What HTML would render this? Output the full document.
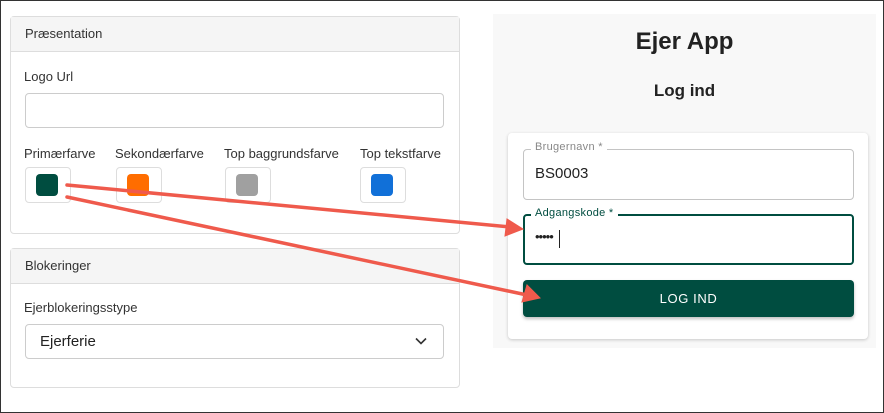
<!DOCTYPE html>
<html><head><style>
body{margin:0;width:884px;height:413px;position:relative;overflow:hidden;background:#fff;font-family:"Liberation Sans",Arial,sans-serif;}
.frame{position:absolute;left:0;top:0;width:882px;height:411px;border:1px solid #333;}
.panel{position:absolute;left:10px;width:448px;border:1px solid #ddd;border-radius:4px;background:#fff;}
.ph{height:34px;background:#f5f5f5;border-bottom:1px solid #ddd;font-size:13px;color:#333;line-height:34px;padding-left:14px;}
.lbl{position:absolute;font-size:13px;color:#333;}
.inp{position:absolute;border:1px solid #ccc;border-radius:4px;background:#fff;}
.sw{position:absolute;top:167px;width:44px;height:34px;border:1px solid #ddd;border-radius:4px;background:#fff;}
.sw i{position:absolute;left:10px;top:6px;width:22px;height:22px;border-radius:4px;}
.right{position:absolute;left:493px;top:14px;width:383px;height:334px;background:#f8f8f8;}
.card{position:absolute;left:508px;top:133px;width:360px;height:206px;background:#fff;border-radius:4px;box-shadow:0 1px 3px rgba(0,0,0,.2);}
</style></head><body>
<div class="frame"></div>
<div class="panel" style="top:16px;height:216px;">
 <div class="ph">Præsentation</div>
</div>
<div class="lbl" style="left:24px;top:69px;">Logo Url</div>
<div class="inp" style="left:25px;top:93px;width:417px;height:33px;"></div>
<div class="lbl" style="left:24px;top:146px;">Primærfarve</div>
<div class="lbl" style="left:115px;top:146px;">Sekondærfarve</div>
<div class="lbl" style="left:224px;top:146px;">Top baggrundsfarve</div>
<div class="lbl" style="left:360px;top:146px;">Top tekstfarve</div>
<div class="sw" style="left:25px;"><i style="background:#004d40"></i></div>
<div class="sw" style="left:116px;"><i style="background:#ff6d00"></i></div>
<div class="sw" style="left:225px;"><i style="background:#a0a0a0"></i></div>
<div class="sw" style="left:360px;"><i style="background:#1170d8"></i></div>

<div class="panel" style="top:248px;height:138px;">
 <div class="ph">Blokeringer</div>
</div>
<div class="lbl" style="left:24px;top:300px;">Ejerblokeringsstype</div>
<div class="inp" style="left:25px;top:324px;width:417px;height:33px;">
 <span style="position:absolute;left:14px;top:8px;font-size:15px;color:#222;">Ejerferie</span>
 <svg style="position:absolute;left:389px;top:12px" width="12" height="8" viewBox="0 0 12 8"><path d="M1 1.5l5 5 5-5" fill="none" stroke="#333" stroke-width="1.6"/></svg>
</div>

<div class="right"></div>
<div style="position:absolute;left:493px;width:383px;top:28px;text-align:center;font-size:24px;font-weight:bold;color:#222;">Ejer App</div>
<div style="position:absolute;left:493px;width:383px;top:81px;text-align:center;font-size:17px;font-weight:bold;color:#222;">Log ind</div>
<div class="card"></div>
<div style="position:absolute;left:523px;top:149px;width:329px;height:49px;border:1px solid #c4c4c4;border-radius:4px;"></div>
<div style="position:absolute;left:531px;top:141px;background:#fff;padding:0 4px;font-size:11px;color:#888;letter-spacing:.3px;">Brugernavn *</div>
<div style="position:absolute;left:535px;top:165px;font-size:15px;color:#222;">BS0003</div>
<div style="position:absolute;left:523px;top:214px;width:327px;height:47px;border:2px solid #004d40;border-radius:4px;"></div>
<div style="position:absolute;left:531px;top:207px;background:#fff;padding:0 4px;font-size:11px;color:#004d40;letter-spacing:.3px;">Adgangskode *</div>
<div style="position:absolute;left:535px;top:229px;font-size:13px;color:#222;letter-spacing:-1px;">•••••</div>
<div style="position:absolute;left:559px;top:230px;width:1px;height:18px;background:#222;"></div>
<div style="position:absolute;left:523px;top:280px;width:331px;height:37px;background:#004d40;border-radius:4px;box-shadow:0 2px 3px rgba(0,0,0,.25);color:#fff;font-size:13px;text-align:center;line-height:37px;letter-spacing:.6px;">LOG IND</div>

<svg style="position:absolute;left:0;top:0" width="884" height="413">
 <g stroke="#ef5a4c" stroke-width="3.5" fill="#ef5a4c" stroke-linecap="round">
  <line x1="67" y1="185" x2="510" y2="227"/>
  <path d="M523 229 L507 219 L505 236 Z" stroke-width="1"/>
  <line x1="67" y1="197" x2="527" y2="295"/>
  <path d="M540 298 L527 285 L522 302 Z" stroke-width="1"/>
 </g>
</svg>
</body></html>
